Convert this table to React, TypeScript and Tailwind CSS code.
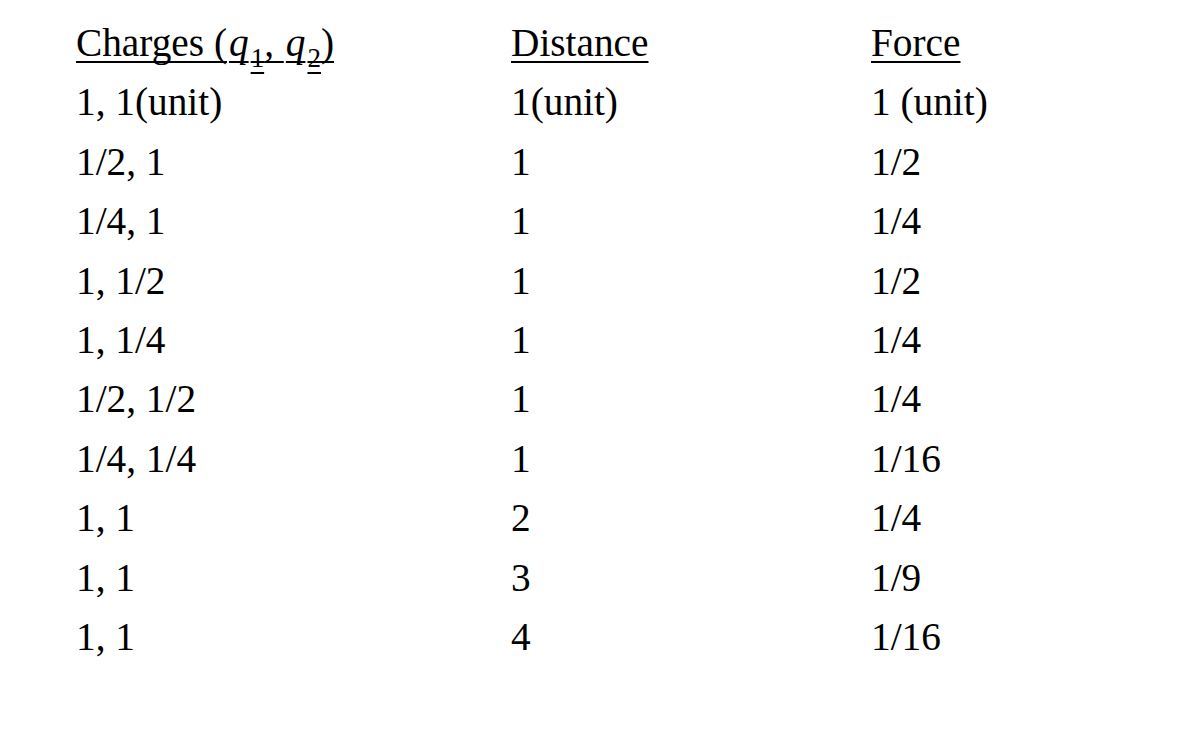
const rows: [string, string, string][] = [
  ["1, 1(unit)", "1(unit)", "1 (unit)"],
  ["1/2, 1", "1", "1/2"],
  ["1/4, 1", "1", "1/4"],
  ["1, 1/2", "1", "1/2"],
  ["1, 1/4", "1", "1/4"],
  ["1/2, 1/2", "1", "1/4"],
  ["1/4, 1/4", "1", "1/16"],
  ["1, 1", "2", "1/4"],
  ["1, 1", "3", "1/9"],
  ["1, 1", "4", "1/16"],
]

const ul = "underline decoration-2 underline-offset-[5px] [text-decoration-skip-ink:none]"

export default function App() {
  return (
    <div
      className="w-[1190px] h-[742px] bg-white text-black pl-[76px] pt-[14px]"
      style={{ fontFamily: '"Liberation Serif", "Times New Roman", serif' }}
    >
      <div className="grid grid-cols-[435px_360px_1fr] text-[39.3px] leading-[59.4px]">
        <div>
          <span className={ul}>
            Charges (<i className="pl-[2px]">q</i>
            <sub className={`text-[27px] align-[-4px] leading-none pl-[2px] ${ul}`}>1</sub>,{" "}
            <i className="pl-[2px]">q</i>
            <sub className={`text-[27px] align-[-4px] leading-none pl-[2px] ${ul}`}>2</sub>)
          </span>
        </div>
        <div>
          <span className={ul}>Distance</span>
        </div>
        <div>
          <span className={ul}>Force</span>
        </div>
        {rows.map((r, i) => (
          <div key={i} className="contents">
            <div>{r[0]}</div>
            <div>{r[1]}</div>
            <div>{r[2]}</div>
          </div>
        ))}
      </div>
    </div>
  )
}
